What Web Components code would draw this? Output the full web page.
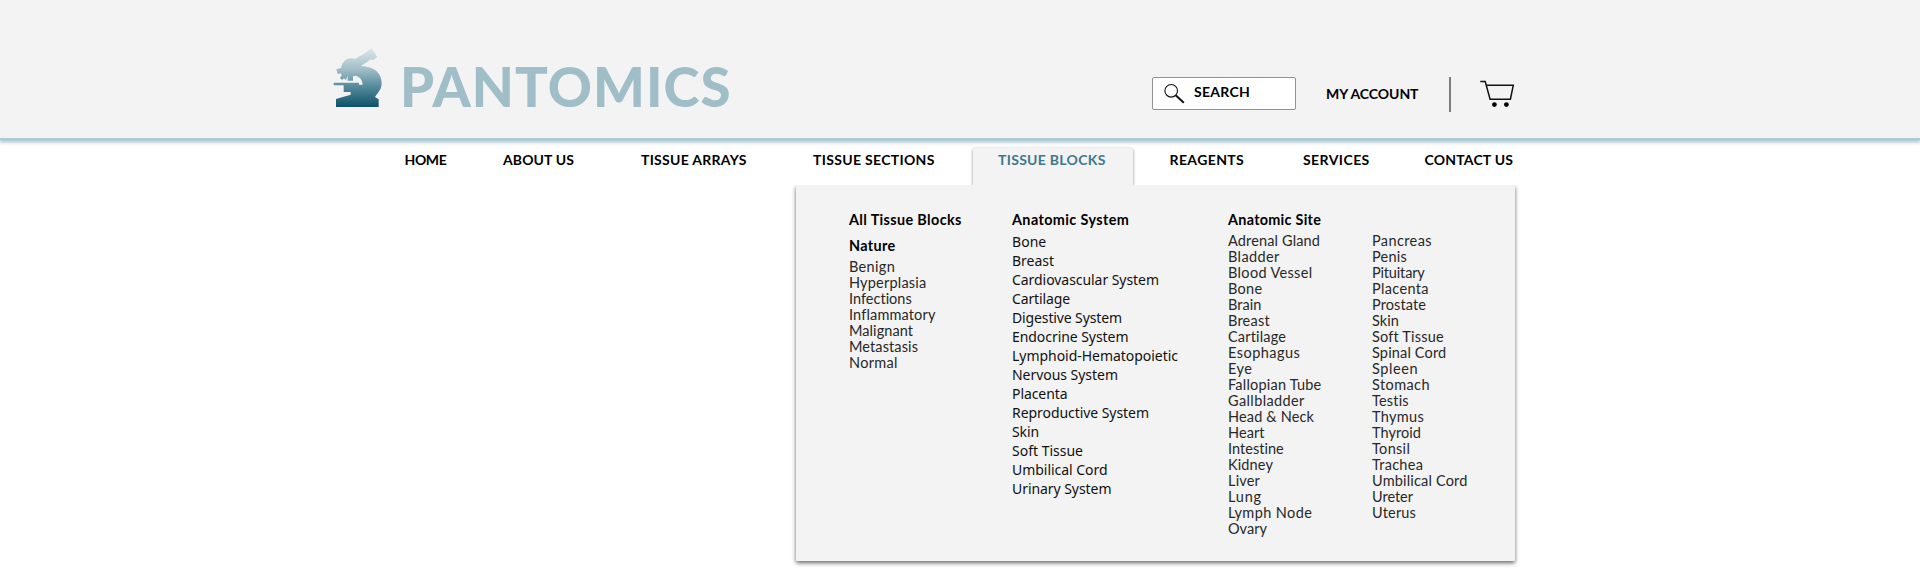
<!DOCTYPE html>
<html lang="en"><head><meta charset="utf-8"><title>Pantomics</title>
<style>body{margin:0;background:#fff;font-family:Lato,"Open Sans",sans-serif;color:#000}</style></head>
<body><pantomics-page></pantomics-page>
<script>
// A single-line label whose tracking is adjusted to fill its nominal width.
class FitText extends HTMLElement{
  connectedCallback(){
    const r=this.attachShadow({mode:'open'});
    r.innerHTML='<style>:host{display:block;white-space:nowrap;width:max-content}span{display:block;width:max-content}</style><span><slot></slot></span>';
    const w=parseFloat(this.getAttribute('w'));
    if(!w)return;
    const s=r.querySelector('span'),n=this.textContent.length;
    s.style.letterSpacing=((w-s.getBoundingClientRect().width)/(n-.5))+'px';
  }
}
class BrandLogo extends HTMLElement{
  constructor(){super();this.attachShadow({mode:'open'}).innerHTML=`
  <style>:host{display:flex;align-items:flex-start;color:#a0bec8}svg{display:block;width:49px;height:60px}
  fit-text{font-size:54.5px;font-weight:900;line-height:60px;margin:9px 0 0 18px}</style>
  <svg viewBox="40 36 147 180"><defs><linearGradient id="g" x1="0" y1="0" x2="0" y2="1"><stop offset="0" stop-color="#dbe8ec"/><stop offset=".35" stop-color="#a3c0c9"/><stop offset=".65" stop-color="#568b9c"/><stop offset="1" stop-color="#0d526a"/></linearGradient></defs>
  <path fill="url(#g)" d="M141 50 155 39 173 66 159 76 154 73 124 93C165 94 186 115 186 145 186 165 172 176 166 186L177 193V216H49V192L93 179V171H72V151H42V143H118V149H129C128 134 120 125 108 122L100 124V137H84V121L79 135 73 130 67 135 61 129 66 121 64 115 54 117 50 103 64 99C67 80 82 67 98 70L106 72 141 51Z"/></svg>
  <fit-text w="331">PANTOMICS</fit-text>`}
}
class SearchBox extends HTMLElement{
  constructor(){super();this.attachShadow({mode:'open'}).innerHTML=`
  <style>:host{display:flex;box-sizing:border-box;width:144px;height:33px;background:#fff;border:1px solid #929292;border-radius:2px;font:bold 14px/16px Lato,sans-serif}
  svg{width:22px;height:22px;margin:5px 0 0 10px}fit-text{margin:6px 0 0 9px}</style>
  <svg viewBox="0 0 22 22" fill="none" stroke="#111"><circle cx="8.2" cy="7.8" r="6.3" stroke-width="1.1"/><path d="M12.7 12.3 20.8 19.7" stroke-width="2"/></svg>
  <fit-text w="56">SEARCH</fit-text>`}
}
class CartIcon extends HTMLElement{
  constructor(){super();this.attachShadow({mode:'open'}).innerHTML=`
  <style>:host{display:block}svg{display:block}</style>
  <svg width="35" height="28" viewBox="0 0 35 28"><path d="M.3 1.6H5.2L10.1 19.2H30.4L33.3 5.3H6.4" fill="none" stroke="#111" stroke-width="1.5"/><circle cx="14.4" cy="24.6" r="2.4"/><circle cx="26.4" cy="24.6" r="2.4"/></svg>`}
}
class SiteHeader extends HTMLElement{
  constructor(){super();this.attachShadow({mode:'open'}).innerHTML=`
  <style>:host{display:flex;box-sizing:border-box;height:138px;background:#f3f3f3;box-shadow:0 2px 0 #adcad2,0 3px 4px 1px #9bbec9;padding-left:333px;align-items:flex-start}
  brand-logo{margin-top:47px;width:819px}
  search-box{margin-top:77px}.acc{font:bold 14px/16px Lato,sans-serif;margin:86px 0 0 30px;width:93px}
  i{width:2px;height:35px;background:#7d7d7d;margin:77px 29px 0 30px}cart-icon{margin-top:80px}</style>
  <brand-logo></brand-logo><search-box></search-box><fit-text class="acc" w="92.5">MY ACCOUNT</fit-text><i></i><cart-icon></cart-icon>`}
}
class NavBar extends HTMLElement{
  constructor(){super();
  const items=[['HOME',404.5,42],['ABOUT US',503,71],['TISSUE ARRAYS',641,105.5],['TISSUE SECTIONS',813,121.5],['TISSUE BLOCKS',998,107.5],['REAGENTS',1169.5,74.5],['SERVICES',1303,66.5],['CONTACT US',1424.5,88.5]];
  const cells=items.map(([t,x,w],i)=>{const next=items[i+1]?items[i+1][1]:1515;
    return `<div class="${i===4?'on':''}" style="width:${next-x}px"><fit-text w="${w}">${t}</fit-text></div>`}).join('');
  this.attachShadow({mode:'open'}).innerHTML=`
  <style>:host{display:flex;position:relative;z-index:1;box-sizing:border-box;height:47px;padding:10px 0 0 404.5px;font:bold 14px/16px Lato,sans-serif}
  div{flex:none}fit-text{position:relative;padding-top:4px}
  .on{position:relative;color:#3f788c}.on::before{content:"";position:absolute;left:-25px;top:0;width:159.5px;height:37px;background:#f3f3f3;border-radius:2px 2px 0 0;box-shadow:0 1px 3px rgba(0,0,0,.5);clip-path:inset(-4px -4px 0 -4px)}</style>${cells}`}
}
class MenuList extends HTMLElement{
  connectedCallback(){
    const rows=this.getAttribute('items').split('|').map(s=>{const [t,w]=s.split(':');return `<fit-text w="${+w+1}">${t}</fit-text>`}).join('');
    this.attachShadow({mode:'open'}).innerHTML=`<style>:host{display:block;font-size:14.5px;line-height:16px;color:#282828}:host([system]){font-family:"Noto Sans",sans-serif;font-size:14px;line-height:19px;color:#111}</style>${rows}`;
  }
}
class MegaMenu extends HTMLElement{
  constructor(){super();this.attachShadow({mode:'open'}).innerHTML=`
  <style>:host{display:grid;position:relative;box-sizing:border-box;width:719px;height:375.5px;margin-left:796px;padding:27px 0 0 53px;background:#f3f3f3;border-radius:1px;grid-template-columns:163px 216px 144px auto;box-shadow:0 2px 4px rgba(0,0,0,.6);clip-path:inset(0 -8px -8px -8px)}
  .h{font-size:14.4px;font-weight:bold;line-height:16px}.n{margin-top:10px}
  .a{margin-top:5px}.b{margin-top:5px}.s{margin-top:4px}.p{margin-top:21px}</style>
  <section><fit-text class="h" w="112.5">All Tissue Blocks</fit-text><fit-text class="h n" w="46.5">Nature</fit-text>
  <menu-list class="a" items="Benign:45|Hyperplasia:76.3|Infections:62|Inflammatory:85.5|Malignant:63|Metastasis:68|Normal:47.7"></menu-list></section>
  <section><fit-text class="h" w="117">Anatomic System</fit-text>
  <menu-list system class="s" items="Bone:33.3|Breast:41|Cardiovascular System:146|Cartilage:57|Digestive System:109|Endocrine System:115.5|Lymphoid-Hematopoietic:165|Nervous System:105|Placenta:54.5|Reproductive System:136|Skin:26|Soft Tissue:70|Umbilical Cord:94.5|Urinary System:98.5"></menu-list></section>
  <section><fit-text class="h" w="93">Anatomic Site</fit-text>
  <menu-list class="b" items="Adrenal Gland:91|Bladder:50.5|Blood Vessel:83.3|Bone:33.3|Brain:32.3|Breast:40.7|Cartilage:57.3|Esophagus:71|Eye:23|Fallopian Tube:92.3|Gallbladder:75.6|Head &amp; Neck:85|Heart:35.5|Intestine:55|Kidney:44|Liver:31|Lung:32.5|Lymph Node:83|Ovary:38"></menu-list></section>
  <section><menu-list class="p" items="Pancreas:58.7|Penis:34|Pituitary:51.7|Placenta:55.7|Prostate:53|Skin:26|Soft Tissue:70.3|Spinal Cord:73.3|Spleen:45|Stomach:56.7|Testis:36|Thymus:51|Thyroid:48|Tonsil:37|Trachea:50|Umbilical Cord:94.5|Ureter:40|Uterus:43"></menu-list></section>`}
}
class PantomicsPage extends HTMLElement{
  constructor(){super();this.attachShadow({mode:'open'}).innerHTML=`<style>:host{display:block;width:1920px;height:579px;overflow:hidden}</style><site-header></site-header><nav-bar></nav-bar><mega-menu></mega-menu>`}
}
customElements.define('fit-text',FitText);
customElements.define('brand-logo',BrandLogo);
customElements.define('search-box',SearchBox);
customElements.define('cart-icon',CartIcon);
customElements.define('site-header',SiteHeader);
customElements.define('nav-bar',NavBar);
customElements.define('menu-list',MenuList);
customElements.define('mega-menu',MegaMenu);
customElements.define('pantomics-page',PantomicsPage);
</script></body></html>
